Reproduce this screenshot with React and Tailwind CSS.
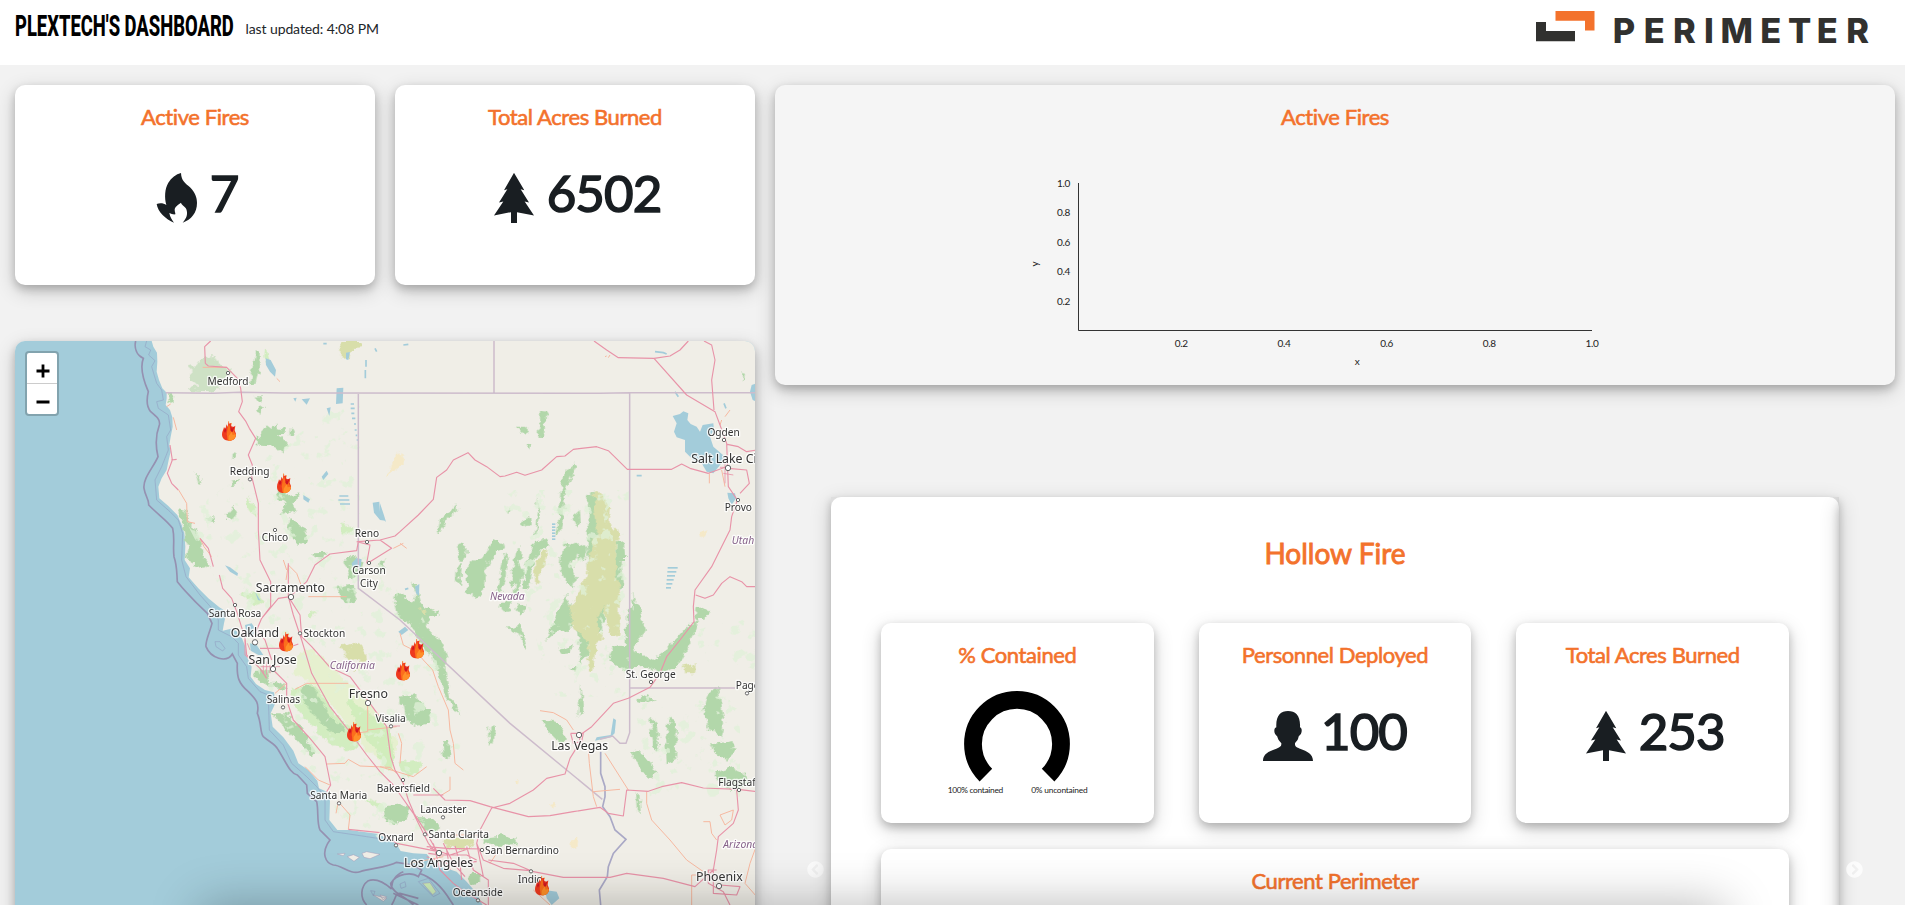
import React from "react";
import { FaChevronCircleLeft, FaChevronCircleRight } from "react-icons/fa";

const SHADOW = "shadow-[0_4px_8px_0_rgba(0,0,0,0.2),0_6px_20px_0_rgba(0,0,0,0.19)]";
const ICON = "#191e22";

function Title({ children }) {
  return (
    <h2 className="text-center text-[22px] leading-[26px] tracking-[-0.42px] text-[#f3722c] [font-variant-ligatures:none] [-webkit-text-stroke:0.6px_#f3722c]">
      {children}
    </h2>
  );
}

function Panel({ title, className, children }) {
  return (
    <section className={`rounded-[10px] pt-[19px] ${SHADOW} ${className}`}>
      <Title>{title}</Title>
      {children}
    </section>
  );
}

function Flame() {
  return (
    <svg width="50" height="50" viewBox="453 519 150 150" fill={ICON}>
      <path d="M540 519C541 543 553 549 567 562C583 578 588 594 588 609C588 638 571 659 545 668C557 655 561 643 556 628C553 618 542 617 540 608C532 613 521 621 521 629C521 636 524 639 523 643C516 644 511 641 505 639C507 652 514 661 519 668C494 658 470 635 467 612C477 608 489 610 496 615C490 594 491 566 502 548C511 533 525 523 540 519Z" />
    </svg>
  );
}

function Tree() {
  return (
    <svg width="50" height="50" viewBox="321 279.5 150 150" fill={ICON}>
      <path d="M396 279L427 331L416 328L441 368L428 365L456 407L405 397V430H387V397L336 407L364 365L351 368L376 328L366 331Z" />
    </svg>
  );
}

function Person() {
  return (
    <svg width="50" height="50" viewBox="246 330 150 150" fill={ICON}>
      <path d="M321 330C344 330 359 344 357 379C364 381 363 394 359 400C355 405 354 403 352 411C350 419 345 421 342 427C341 437 348 439 357 443C379 451 396 459 396 480H246C246 459 264 451 286 443C296 439 302 436 301 427C297 421 292 418 290 410C288 403 286 405 283 400C279 394 278 381 286 379C284 344 299 330 321 330Z" />
    </svg>
  );
}

function Stat({ icon, value }) {
  return (
    <div className="mt-[33px] flex items-center justify-center gap-[8px]">
      <div className="pt-[9px]">{icon}</div>
      <span className="text-[51px] leading-[60px] tracking-[-0.9px] text-[#191e22] [-webkit-text-stroke:1.6px_#191e22]">{value}</span>
    </div>
  );
}

function LineChart() {
  const ticks = ["0.2", "0.4", "0.6", "0.8", "1.0"];
  return (
    <svg className="mx-auto mt-[35px] block" width="600" height="220" viewBox="1035 165 600 220" overflow="visible" fontSize="10" letterSpacing="-0.35" fill="#222">
      <path d="M1078.5 183V330.5H1592" stroke="#333" fill="none" />
      {ticks.map((t, i) => (
        <g key={t}>
          <text x={1070} y={334 - (i + 1) * 29.4} textAnchor="end">{t}</text>
          <text x={1078.5 + (i + 1) * 102.7} y="347" textAnchor="middle">{t}</text>
        </g>
      ))}
      <text x="1357" y="365" textAnchor="middle">x</text>
      <text transform="translate(1037.5 264) rotate(-90)" textAnchor="middle">y</text>
    </svg>
  );
}

function Gauge() {
  return (
    <svg className="mx-auto mt-[15px] block" width="180" height="125" viewBox="927.3 683 180 125" fontSize="8.4" fill="#222">
      <path d="M986.2 775.1A44 44 0 1 1 1048.4 775.1" fill="none" stroke="#000" strokeWidth="17.8" />
      <text x="948" y="793" textLength="55.5">100% contained</text>
      <text x="1031.5" y="793" textLength="56.5">0% uncontained</text>
    </svg>
  );
}

/* Map drawing: units are thirds of a pixel. */
const GREEN = "#b2d7aa";
const LIGHT = "#cdecb8";
const OLIVE = "#d8deaa";
const WATER = "#a3ccda";

const land =
  "M455 33L460 50L471 68L472 95L470 125L477 150L487 175L500 188L500 205L497 225L510 240L517 262L518 290L512 320L508 345L512 365L506 390L500 420L485 445L475 470L478 505L505 528L532 555L545 585L553 610L556 650L554 690L570 715L566 742L595 775L625 805L658 832L680 845L672 880L668 902L700 895L722 915L736 950L738 975L755 1010L752 1040L768 1062L795 1080L822 1087L826 1120L812 1150L818 1190L850 1222L880 1262L895 1300L925 1320L952 1352L957 1375L980 1385L990 1410L988 1470L1012 1500L1050 1500L1135 1512L1188 1540L1202 1563L1240 1570L1280 1572L1310 1605L1370 1625L1400 1655L1430 1690L1450 1730H2270V33Z";

const siskiyou = "M570 108L590 105L610 80L640 72L650 95L680 110L700 125L665 140L655 180L635 187L590 185L565 182L590 165L572 150Z";

const forests = [
  // Cascades
  "M765 68L782 66L780 120L770 158L750 160L757 120Z",
  "M503 190L522 195L520 220L507 212Z",
  "M765 200L785 198L780 215L770 214ZM770 240L790 225L797 236L775 256Z",
  "M770 320L785 325L790 300L800 286L815 297L829 280L830 295L858 299L848 315L832 316L850 325L868 345L845 368L825 352L800 348L770 346ZM870 290L880 312L868 318Z",
  "M695 372L705 366L706 386L694 390ZM694 455L722 450L712 462L697 466Z",
  "M585 422L592 430L604 462L597 460Z",
  "M836 475L860 482L856 500L898 490L890 508L880 518L885 548L868 540L845 556L838 548L862 525L840 510Z",
  "M678 555L700 530L712 548L700 568L684 570ZM620 558L648 560L640 577L623 572Z",
  "M868 572L885 570L915 598L925 630L900 645L885 640L872 618L862 592Z",
  "M535 535L555 540L572 580L590 605L605 640L612 680L628 708L608 716L580 705L560 680L565 655L555 620Z",
  "M1010 770L1050 765L1072 780L1062 815L1040 820L1022 805ZM940 670L985 668L970 686L945 684Z",
  "M1030 690L1060 680L1090 700L1075 740L1050 745ZM1135 700L1158 688L1150 725L1135 735Z",
  // Sierra Nevada
  "M1180 800L1200 790L1235 815L1250 790L1232 760L1246 765L1262 820L1290 835L1320 848L1290 862L1280 890L1320 930L1338 975L1340 1030L1352 1100L1385 1155L1362 1140L1330 1085L1318 1040L1300 990L1260 930L1230 880L1190 860Z",
  "M1198 1100L1255 1092L1255 1110L1290 1140L1290 1178L1250 1188L1220 1170L1215 1125L1198 1120Z",
  "M1328 1240L1350 1238V1282L1330 1278ZM1468 1190L1484 1186L1482 1240L1467 1250Z",
  "M1150 1430L1200 1422L1230 1435L1222 1470L1190 1480L1155 1472Z",
  "M1245 1465L1290 1465L1320 1490L1310 1505L1270 1500Z",
  "M1445 1520L1500 1514L1550 1525L1545 1545L1490 1548L1450 1540Z",
  "M1405 1635L1440 1630L1440 1660L1418 1665Z",
  // Coast Ranges
  "M760 1020L800 1018L810 1050L850 1060L860 1080L820 1075L790 1060L765 1045Z",
  "M900 1070L930 1066L960 1100L985 1150L1020 1180L1040 1210L1000 1208L960 1180L930 1140L910 1110Z",
  "M815 1150L860 1150L900 1190L930 1240L950 1270L930 1275L880 1220L840 1180Z",
  // Nevada ranges
  "M1620 242L1645 245L1638 275L1630 322L1615 320L1620 280ZM1548 290L1575 290L1590 305L1575 314L1560 304ZM1580 340L1595 338L1590 360Z",
  "M1312 610L1320 570L1350 545L1372 520L1374 540L1340 565L1325 605Z",
  "M1375 640L1398 645L1400 668L1385 700L1375 695ZM1370 710L1385 705L1380 765L1368 762Z",
  "M1400 715L1430 688L1450 680L1480 630L1510 640L1515 655L1490 662L1470 690L1455 740L1450 795L1425 803L1400 780Z",
  "M1500 740L1512 670L1524 690L1520 740L1500 790L1490 775ZM1530 770L1545 665L1560 648L1568 670L1560 700L1570 720L1555 790L1540 800L1545 760Z",
  "M1500 820L1530 815L1535 845L1515 850ZM1550 820L1575 825L1572 852L1555 848ZM1575 720L1600 640L1640 628L1648 648L1625 660L1600 690L1590 780L1570 775Z",
  "M1565 575L1590 560L1592 582L1575 592ZM1604 615L1614 500L1618 540L1610 610ZM1510 540L1530 530L1525 552Z",
  "M1670 620L1680 500L1690 430L1725 403L1726 412L1695 480L1690 560L1680 615Z",
  "M1720 560L1740 543L1742 570L1728 590ZM1690 640L1720 645L1735 640L1760 655L1755 690L1735 695L1728 670L1715 700L1728 740L1722 775L1700 765L1680 720Z",
  "M1765 490L1780 485L1795 580L1790 680L1815 720L1815 870L1745 1005L1730 900L1765 780L1760 640Z",
  "M1850 640L1875 635L1880 690L1865 690L1872 770L1855 780L1845 720Z",
  "M1665 870L1700 790L1712 830L1770 840L1740 860L1700 900L1670 905L1640 930Z",
  "M1520 895L1560 885L1580 950L1575 960L1555 910Z",
  "M1680 960L1715 945L1712 970L1690 972ZM1710 1010L1728 1012L1720 1022ZM1735 1160L1740 1060L1748 1120L1750 1150L1725 1165Z",
  "M1625 1165L1680 1180L1700 1230L1680 1240L1640 1200Z",
  "M1895 785L1915 830L1925 870L1910 870ZM1880 840L1900 830L1930 880L1935 900L1900 960L1960 990L2000 960L2050 900L2090 870L2095 885L2060 960L2030 1010L1980 1030L1930 1010L1870 1020L1820 990L1840 950L1880 940Z",
  // Utah and Arizona
  "M2090 830L2130 840L2110 870L2085 870ZM2228 125L2238 140L2230 150Z",
  "M2150 1065L2160 1100L2175 1180L2165 1220L2130 1200L2110 1140L2125 1090Z",
  "M2130 1240L2200 1230L2210 1260L2180 1290L2140 1265Z",
  "M2010 1160L2030 1180L2025 1290L2000 1300L1995 1230Z",
  "M1890 1270L1920 1260L1960 1310L1970 1330L1945 1345L1915 1300Z",
  "M2145 1330L2200 1310L2230 1330L2250 1360L2190 1380L2160 1360Z",
  "M1908 1390L1918 1390L1922 1450L1910 1440ZM1950 1160L1970 1180L1978 1260L1960 1250Z",
  "M1905 1110L1930 1095L1965 1110L1940 1120Z",
];

const lights = [
  "M795 55L802 60L808 95L798 98L793 75Z",
  "M880 1075L935 1060L975 1100L1000 1150L1060 1200L1075 1240L1050 1262L1000 1250L950 1200L900 1150L870 1110Z",
  "M740 500L760 520L770 555L745 540ZM1020 580L1060 590L1050 615L1025 610Z",
  "M1040 1095L1080 1130L1170 1190L1185 1300L1160 1320L1120 1250L1070 1190Z",
  "M1195 1300L1260 1288L1265 1310L1235 1340L1205 1325Z",
  "M1080 1400L1140 1420L1170 1450L1140 1440ZM930 840L950 850L930 865Z",
  "M720 790L770 780L795 815L760 830Z",
];

const olives = [
  "M1020 33H1085V52L1050 54L1045 85L1022 86Z",
  "M1780 485L1795 483L1830 530L1825 580L1862 610L1848 650L1850 730L1860 810L1855 920L1830 910L1810 830L1790 880L1805 920L1785 960L1780 1020L1765 1025L1765 940L1715 880L1710 835L1760 740L1765 680L1790 600Z",
  "M1605 700L1625 665L1642 660L1635 710L1620 730L1620 762L1605 760Z",
  "M1260 840L1280 835L1275 860ZM2045 1010L2090 1000L2085 1030L2050 1030Z",
  "M1325 1530L1400 1520L1430 1540L1380 1560L1335 1548Z",
  "M1020 950L1060 935L1095 955L1100 980L1085 1010L1060 1030L1075 995L1040 985Z",
];

const sands = [
  "M1200 365V405L1160 440L1170 410ZM1165 435L1200 365L1212 400L1180 425Z",
  "M1715 1535L1735 1528L1730 1555L1715 1560ZM2100 610L2120 600L2110 625ZM1650 1420L1668 1415L1662 1430ZM1540 1355L1556 1350L1552 1364Z",
];

const lakes = [
  "M797 85L812 90L828 120L825 140L810 125L798 105ZM1010 175L1030 173L1028 220L1008 222ZM1118 518L1138 515L1140 545L1157 572L1140 570L1122 548Z",
  "M1055 700L1070 684L1085 688L1082 712L1058 710ZM1038 68L1050 66L1045 90L1038 88Z",
  "M910 495L930 508L925 518L910 508ZM965 440L980 422L985 432L970 450ZM905 208L930 205L920 224ZM980 235L992 232L988 258ZM880 205L890 203L886 215Z",
  "M2018 258L2040 252L2050 244L2065 250L2062 270L2072 282L2090 290L2100 305L2108 285L2140 280L2142 300L2130 320L2140 350L2175 380L2170 395L2160 405L2140 430L2120 425L2105 400L2080 390L2055 365L2055 330L2030 322L2022 305L2030 280Z",
  "M2182 488L2205 490L2208 505L2195 525L2185 505ZM2255 165L2270 160V215L2258 210L2250 185Z",
  "M1140 520L1150 550L1158 575L1140 565ZM1245 770L1258 762L1257 798L1248 790Z",
  "M1195 905L1215 890L1225 900L1205 915ZM1635 1680L1670 1685L1678 1705L1655 1725L1640 1705Z",
  "M735 885L755 880L765 895L758 920L740 915ZM750 940L770 945L790 975L775 975L752 962ZM675 706L690 712L714 730L712 738L690 725ZM765 785L782 812L774 810Z",
  "M1840 1165L1848 1170L1844 1210L1832 1222L1785 1232L1790 1222L1832 1215Z",
];

const roadsMain = [
  "M632 33L614 50L616 100L625 108L680 112L715 148L722 175L727 215L716 245L738 275L748 295L767 325L745 375L757 405L755 440L764 475L775 520V600L780 690L812 755L812 830L785 865",
  "M510 345L517 390L502 430L515 460L535 480",
  "M530 388L514 390M600 625L625 655L640 710M658 735L668 775L695 805L712 850L735 925L740 975L780 1015L800 1045",
  "M865 700V800L880 855L905 930L935 1030L990 1130L1045 1200L1100 1275L1140 1325L1180 1365L1240 1450L1285 1540L1310 1570",
  "M785 865L835 805L870 800L920 755L945 705L990 672L1070 662L1075 635L1140 630L1185 618L1200 605L1255 555L1300 508L1310 442L1340 420L1360 390L1404 368L1425 390L1460 410L1500 440L1515 438L1550 427L1575 436L1625 420L1670 380L1695 378L1720 358L1790 350L1825 362L1882 418H2015L2045 402L2070 415L2125 430L2180 410",
  "M865 800L900 855L905 920L935 950L990 1012L1050 1040L1110 1120L1160 1190L1172 1280L1185 1320L1210 1360L1225 1410L1242 1450L1280 1510L1320 1580",
  "M785 865L770 900L795 930L815 990M780 955L860 955L895 942",
  "M820 1020L860 1060V1110L880 1170L930 1225L975 1280L983 1320L992 1365L980 1385M1045 1498L1140 1508L1190 1540L1240 1550L1330 1568",
  "M1240 1395L1330 1395M1300 1375L1335 1410L1410 1412L1470 1430L1585 1460L1650 1457L1720 1445L1800 1432L1825 1450L1870 1458L1880 1380L1945 1384L1985 1370L2045 1358L2110 1374L2215 1378L2270 1385",
  "M1475 1434L1530 1420L1600 1380L1640 1345L1695 1332L1710 1285L1738 1240L1740 1215L1775 1190L1840 1120L1885 1105L1950 1072L1980 1030L2000 980L2040 930L2082 875L2080 830L2085 780L2135 710L2160 660L2190 600L2195 560L2212 510L2185 470L2180 340L2160 285L2145 245L2060 195L1962 85L1855 83L1820 60L1782 33",
  "M2112 33L2135 45L2145 90L2135 150L2142 240M1962 85L2010 78L2040 60L2065 33M2182 343L2215 350L2240 365L2270 360M2185 415L2240 420L2248 460L2220 490M2087 795L2115 805L2140 795L2165 760L2190 740L2225 755L2240 770H2270",
  "M1465 1590L1540 1600L1600 1625L1690 1642H1830L1880 1630L1990 1645L2085 1670L2140 1620L2150 1560L2155 1520L2200 1480L2215 1440L2210 1380M1475 1434L1440 1500L1430 1540L1450 1590L1510 1615L1592 1622",
  "M1712 1210H1750L1745 1235L1720 1240L1712 1210M2140 1615V1690L2210 1695L2220 1670L2160 1665M2150 1620H2125V1660L2170 1685L2190 1725",
  "M1280 1550L1340 1555L1450 1557M1285 1570L1320 1575H1400L1430 1590M1300 1540L1320 1620L1360 1660L1400 1690L1460 1725M1340 1560L1350 1620M1365 1548L1380 1600L1385 1650M1400 1550L1420 1620L1465 1650V1725M1290 1555L1350 1575L1410 1555M1280 1580L1340 1600L1430 1595M1330 1540L1360 1600L1395 1640M1430 1540L1450 1640",
  "M1070 635L1110 645L1100 700M1140 630L1175 655L1110 695",
];

const roadsMinor = [
  "M608 112L680 112M520 262L530 300M500 230L512 222M536 480L560 520L562 575L585 580M600 625L612 650L635 680",
  "M825 1090L860 1060M885 1078L920 1060L1045 1060M980 1302L1035 1300L1045 1288L1080 1308L1170 1312L1190 1330M1103 1120V1205L1060 1210M1103 1200L1190 1190",
  "M858 750L865 705L890 730L905 770M850 690L860 720M925 800L1040 800M915 1310L955 1350L990 1365M1015 1415L1050 1455L1045 1498M1015 1415L1008 1450",
  "M1200 910L1210 945L1250 965L1270 990L1298 1020L1315 1070L1345 1140L1350 1200L1360 1240L1365 1300L1390 1320M1350 1340V1380L1325 1395M1195 1210L1205 1240L1200 1300M1140 1310L1240 1340L1280 1310",
  "M1620 1142L1660 1148L1700 1170L1720 1200M1765 1260L1768 1300L1780 1400L1790 1430M1815 1270L1885 1380M1780 1385L1860 1378M1940 1385V1420L1955 1470L2010 1530L2060 1590L2110 1625",
  "M2175 260L2190 240M2165 270L2160 285M2128 430V460M2165 420L2175 470M2110 1475L2130 1475L2135 1510L2150 1530M2160 1455L2200 1440L2195 1470L2175 1485L2160 1455M2270 1545L2250 1600L2235 1660L2270 1700M2075 1635V1725M2075 1635L2120 1635",
  "M830 145L840 155M1200 640L1220 655M1180 655L1210 640M1340 1515H1440M1230 1600L1330 1580M1470 1600L1490 1570M1600 1680L1650 1725M1820 78L1815 80M1825 83L1830 75",
];

const borders =
  "M497 188L640 190L720 187L850 189L1800 190L1890 188H2270M1075 190V775L1200 870L1530 1180L1807 1408M1482 33V188M1889 190V1208L1878 1240L1860 1240L1838 1218L1800 1228M1889 1074H2205";
const river =
  "M1802 1265V1330L1815 1370V1400L1808 1430L1830 1460L1845 1500L1878 1528L1840 1570L1825 1610L1822 1640L1798 1680L1802 1725";

const towns = [
  ["Medford", 684, 164, 684, 129], ["Redding", 749, 434, 750, 448], ["Chico", 825, 634, 825, 600], ["Reno", 1101, 622, 1101, 636],
  ["Carson", 1107, 733, 1107, 699], ["City", 1107, 770], ["Santa Rosa", 705, 861, 705, 825], ["Stockton", 973, 921, 900, 910],
  ["Salinas", 850, 1118, 849, 1132], ["Visalia", 1172, 1176, 1173, 1189], ["Santa Maria", 1016, 1407, 1017, 1420],
  ["Bakersfield", 1210, 1385, 1209, 1350], ["Lancaster", 1330, 1450, 1329, 1462], ["Oxnard", 1188, 1533, 1188, 1546],
  ["Santa Clarita", 1376, 1525, 1275, 1513], ["San Bernardino", 1566, 1571, 1446, 1560], ["Indio", 1591, 1659, 1593, 1624],
  ["Oceanside", 1433, 1697, 1434, 1711], ["St. George", 1952, 1044, 1953, 1056], ["Page", 2243, 1077, 2241, 1090],
  ["Flagstaff", 2216, 1367, 2217, 1380], ["Ogden", 2171, 319, 2172, 330], ["Provo", 2215, 542, 2214, 510],
];
const cities = [
  ["Sacramento", 871, 787, 873, 801], ["Oakland", 765, 921, 765, 937], ["San Jose", 818, 1002, 819, 1017], ["Fresno", 1105, 1104, 1104, 1119],
  ["Los Angeles", 1316, 1611, 1317, 1569], ["Las Vegas", 1739, 1260, 1737, 1215], ["Phoenix", 2158, 1653, 2157, 1668], ["Salt Lake City", 2188, 400, 2184, 414],
];
const states = [["California", 1057, 1016], ["Nevada", 1522, 810], ["Utah", 2229, 641], ["Arizona", 2222, 1553]];
const fires = [[687, 303], [852, 460], [858, 935], [1062, 1205], [1251, 956], [1209, 1022], [1626, 1667]];
const dashes = [[1656, 580, 10, 6], [2003, 711, 30, 6]];

function MapMarker({ x, y }) {
  return (
    <g transform={`translate(${x - 21} ${y - 30})`}>
      <path d="M20 0L22 8L27 6L28 16L35 18L40 14L38 28L42 38C42 52 34 59 21 59C8 59 0 52 0 40C0 30 5 26 6 18L10 24L14 10L17 18Z" fill="#ee3a1f" />
      <path d="M17 20L21 8L25 22L30 30L37 20L36 32L42 42C41 54 33 59 21 59C14 58 17 48 14 40Z" fill="#fb6f1c" />
      <path d="M20 59V46L29 32L32 42L41 40C41 53 33 59 20 59Z" fill="#ff9029" />
      <path d="M26 14L30 24L37 15L34 30L30 34L25 28ZM10 20L13 28L9 36L6 30Z" fill="#cf1522" />
      <path d="M19 0L22 3L19 7ZM27 5L30 8L27 11Z" fill="#ff9029" />
    </g>
  );
}

function FireMap() {
  return (
    <svg className="block" width="740" height="564" viewBox="45 33 2220 1692" fontFamily="'Noto Sans', sans-serif" fill="#333">
      <defs>
        <filter id="rough" x="0" y="0" width="100%" height="100%">
          <feTurbulence type="fractalNoise" baseFrequency="0.045" numOctaves="3" seed="4" />
          <feDisplacementMap in="SourceGraphic" scale="26" xChannelSelector="R" yChannelSelector="G" />
        </filter>
        <filter id="speckle" x="0" y="0" width="100%" height="100%">
          <feTurbulence type="fractalNoise" baseFrequency="0.025" numOctaves="4" seed="11" result="n" />
          <feColorMatrix in="n" type="matrix" values="0 0 0 0 0.75  0 0 0 0 0.88  0 0 0 0 0.69  0 14 0 0 -8.8" />
          <feComposite in2="SourceGraphic" operator="in" />
        </filter>
      </defs>
      <rect x="45" y="33" width="2220" height="1692" fill={WATER} />
      <path d={land} fill="#f0eee7" />
      <path d="M1012 1572L1035 1570L1030 1577ZM1042 1580L1060 1574L1078 1582L1062 1594ZM1086 1570L1100 1565L1140 1573L1110 1586L1092 1582ZM1120 1695L1160 1705L1150 1714ZM1140 1695L1160 1700L1150 1710Z" fill="#f0eee7" stroke="#a49bb9" strokeWidth="1.5" />
      <path d="M1268 1660L1290 1658L1308 1685L1298 1694Z" fill={LIGHT} stroke="#a49bb9" strokeWidth="1.5" />
      <g filter="url(#rough)">
        <path d="M880 1030L940 1060L1000 1130L1100 1260L1180 1320L1190 1230L1120 1130L1040 1050L940 960L900 960Z" fill="#e6f0cf" />
        <path d={lights.join("")} fill={LIGHT} opacity="0.85" />
        <path d={siskiyou} fill={GREEN} opacity="0.55" />
        <path d={forests.join("")} fill={GREEN} />
        <path d={olives.join("")} fill={OLIVE} />
        <path d={sands.join("")} fill="#f5e9c8" />
      </g>
      <path d="M550 560L1080 180V640L1240 800L1400 1150L1350 1400L1250 1560L1000 1480L850 1200L700 850ZM1500 480H1890V1100H1650ZM1900 1100L2220 1100V1400H1950ZM2090 900L2265 850V1020L2100 1010Z" filter="url(#speckle)" opacity="0.75" />
      <path d={lakes.join("")} fill={WATER} />
      {dashes.map(([x, y, w, h]) =>
        [0, 1, 2, 3, 4, 5].map((i) => <rect key={`${x}-${i}`} x={x - (w > 20 ? i * 1 : 0)} y={y + i * (w > 20 ? 12 : 9)} width={w - i * (w > 20 ? 3 : 0)} height={h - 1} fill={WATER} />)
      )}
      <path d="M1052 222H1062M1052 235H1064M1054 250H1063M1056 265H1066M1062 282H1068M1064 300H1070M1067 316H1072M1070 330H1076M1098 90V110M1096 120V145M1018 498H1045M1015 510H1048M1020 522H1050M1125 55L1130 65M970 41H980M1215 778L1225 775M2025 185L2035 200M2172 220L2178 235M1210 45L1225 43M1910 437H1925M1965 65L1990 68L2000 72" stroke={WATER} strokeWidth="5" fill="none" />
      <path d="M407 33C402 55 410 75 430 85C420 110 430 150 445 185C440 205 440 230 452 245C470 260 482 270 478 285C465 320 468 355 474 380C462 410 428 445 432 475C436 500 448 510 446 525C475 555 500 570 518 595C525 625 518 650 522 680C532 710 530 730 532 755C560 790 595 825 622 850L636 880C630 905 615 935 618 950C632 985 680 1000 697 972L712 1000C710 1040 715 1060 745 1085C770 1110 778 1120 772 1150C785 1180 780 1210 790 1220C810 1238 825 1240 835 1260C860 1300 870 1330 892 1335L920 1365L922 1390L950 1415C956 1440 950 1480 960 1500L990 1530C960 1570 978 1600 1000 1605C1025 1605 1050 1635 1080 1625C1110 1615 1165 1612 1190 1597L1240 1605" fill="none" stroke="#9591b1" strokeWidth="5" />
      <path d="M1175 1677C1150 1655 1125 1645 1105 1652C1080 1670 1080 1705 1100 1725M1175 1677C1175 1650 1185 1635 1210 1625M1175 1725C1190 1700 1185 1690 1200 1690L1255 1705M1255 1725L1180 1690M1240 1605L1265 1620L1255 1640C1235 1625 1190 1630 1172 1660C1175 1690 1220 1700 1240 1725M1258 1630C1290 1640 1320 1660 1350 1710L1360 1725" fill="none" stroke="#9591b1" strokeWidth="5" />
      <path d="M440 33L435 50L452 60L446 75L465 92L455 110L470 160L485 180L490 210L470 215L475 235L505 255L512 300L500 320L505 360L485 410L465 450L470 510L510 545L535 570L548 610L545 690L558 740L600 795L640 840L655 870L655 900L695 920L715 940L715 975L740 1010L745 1045L780 1085L805 1095L808 1200L850 1245L875 1300L920 1340L950 1370L975 1400L975 1470L1000 1505L1100 1520L1165 1530M645 935L660 935L675 955L668 963L648 950ZM1200 1662L1215 1655L1218 1670L1203 1675ZM1112 1682L1125 1684L1120 1697ZM1255 1655L1285 1645L1320 1690L1300 1700Z" fill="none" stroke="#8f9bc0" strokeWidth="2" opacity="0.8" />
      <path d={borders} fill="none" stroke="#cdbccc" strokeWidth="4.5" />
      <path d={river} fill="none" stroke="#aaa9c6" strokeWidth="5" />
      <path d={roadsMinor.join("")} fill="none" stroke="#f6b8a0" strokeWidth="3" strokeLinejoin="round" />
      <path d={roadsMain.join("")} fill="none" stroke="#e893a8" strokeWidth="3.4" strokeLinejoin="round" />
      <g fill="none" stroke="#e893a8" strokeWidth="2.5">
        <path d="M735 930V975L775 1010M742 940L750 960M782 1010H840M790 1000V1030M800 995L800 1035M810 1005V1030M1180 1188H1200M2175 400V460M2160 412H2190M2170 430L2200 435" />
      </g>
      <g stroke="#fff" strokeOpacity="0.8" strokeWidth="8" strokeLinejoin="round" paintOrder="stroke" textAnchor="middle">
        {states.map(([n, x, y]) => <text key={n} x={x} y={y} fontSize="31" fontStyle="italic" fill="#86628a">{n}</text>)}
        {towns.map(([n, x, y]) => <text key={n} x={x} y={y} fontSize="30.5">{n}</text>)}
        {cities.map(([n, x, y]) => <text key={n} x={x} y={y} fontSize="37">{n}</text>)}
      </g>
      <g fill="#fff" stroke="#666" strokeWidth="3">
        {towns.filter((t) => t.length > 3).map(([n, , , x, y]) => <circle key={n} cx={x} cy={y} r="5" />)}
        {cities.map(([n, , , x, y]) => <circle key={n} cx={x} cy={y} r="8" />)}
      </g>
      {fires.map(([x, y]) => <MapMarker key={x} x={x} y={y} />)}
    </svg>
  );
}

function ZoomControl() {
  return (
    <div className="absolute top-2.5 left-2.5 flex h-[65px] w-[34px] flex-col rounded border-2 border-black/20 bg-white bg-clip-padding">
      <button className="flex h-[31px] items-center justify-center border-b border-[#ccc] pt-[5px] pl-0.5" aria-label="Zoom in">
        <svg width="14" height="14" viewBox="0 0 14 14" stroke="#000" strokeWidth="2.8"><path d="M7 0.5V13.5M0.5 7H13.5" /></svg>
      </button>
      <button className="flex h-[30px] items-center justify-center pt-[5px] pl-0.5" aria-label="Zoom out">
        <svg width="14" height="14" viewBox="0 0 14 14" stroke="#000" strokeWidth="2.8"><path d="M0.5 7H13.5" /></svg>
      </button>
    </div>
  );
}

function Logo() {
  return (
    <svg width="345" height="48" viewBox="1530 4 345 48">
      <path d="M1536 22H1546V31H1575V41.3H1536Z" fill="#31312f" />
      <path d="M1555.5 11H1594.5V30.5H1585V20.7H1555.5Z" fill="#f3722c" />
      <text
        x="1612.8 1643.8 1673 1704 1720.6 1760.2 1788 1816.8 1846.3"
        y="43.4"
        fontFamily="Inter, sans-serif"
        fontWeight="800"
        fontSize="34.4"
        fill="#31312f"
      >
        PERIMETER
      </text>
    </svg>
  );
}

export default function App() {
  return (
    <div className="relative h-[905px] w-[1905px] overflow-hidden bg-[#f2f2f2] font-['Lato',sans-serif] text-[#212529]">
      <header className="flex h-[65px] items-start justify-between bg-white pl-[15px]">
        <div className="flex">
          <h1 className="w-[230.5px] pt-[6px] text-[30px] leading-[36px] whitespace-nowrap text-black">
            <span className="inline-block origin-left scale-x-[0.613] font-['Roboto',sans-serif] font-extrabold">PLEXTECH'S DASHBOARD</span>
          </h1>
          <p className="pt-[19px] text-[14px] leading-5 tracking-[-0.1px]">last updated: 4:08 PM</p>
        </div>
        <div className="pt-1 pr-[30px]"><Logo /></div>
      </header>

      <main className="flex items-start gap-5 px-[15px] pt-5">
        <div className="w-[740px] shrink-0">
          <div className="flex gap-5">
            <Panel title="Active Fires" className="h-[200px] flex-1 bg-white"><Stat icon={<Flame />} value="7" /></Panel>
            <Panel title="Total Acres Burned" className="h-[200px] flex-1 bg-white"><Stat icon={<Tree />} value="6502" /></Panel>
          </div>
          <div className={`relative mt-14 h-[600px] overflow-hidden rounded-[10px] ${SHADOW}`}>
            <FireMap />
            <ZoomControl />
          </div>
        </div>

        <div className="w-[1120px] shrink-0">
          <Panel title="Active Fires" className="h-[300px] bg-[#f5f5f5]"><LineChart /></Panel>

          <div className="mt-28 flex items-start justify-center gap-[7px]">
            <FaChevronCircleLeft className="mt-[364px] text-[17px] text-white/75" />
            <div className={`flex h-[460px] w-[1008px] shrink-0 overflow-hidden bg-[#dedede] ${SHADOW}`}>
              <section className="w-[1008px] shrink-0 rounded-[10px] bg-white px-[50px] pt-[39px]">
                <h1 className="text-center text-[28px] leading-[34px] text-[#f3722c] [-webkit-text-stroke:0.9px_#f3722c]">Hollow Fire</h1>
                <div className="mt-[53px] flex gap-[45px]">
                  <Panel title="% Contained" className="h-[200px] flex-1 bg-white"><Gauge /></Panel>
                  <Panel title="Personnel Deployed" className="h-[200px] flex-1 bg-white"><Stat icon={<Person />} value="100" /></Panel>
                  <Panel title="Total Acres Burned" className="h-[200px] flex-1 bg-white"><Stat icon={<Tree />} value="253" /></Panel>
                </div>
                <Panel title="Current Perimeter" className="mt-[26px] h-[300px] bg-white" />
              </section>
              <section className={`w-[1008px] shrink-0 rounded-[10px] bg-white ${SHADOW}`} />
            </div>
            <FaChevronCircleRight className="mt-[364px] text-[17px] text-white/75" />
          </div>
        </div>
      </main>

      <div className="pointer-events-none absolute top-[905px] right-[180px] left-[200px] h-[100px] shadow-[0_0_50px_rgba(0,0,0,0.28)]" />
    </div>
  );
}
